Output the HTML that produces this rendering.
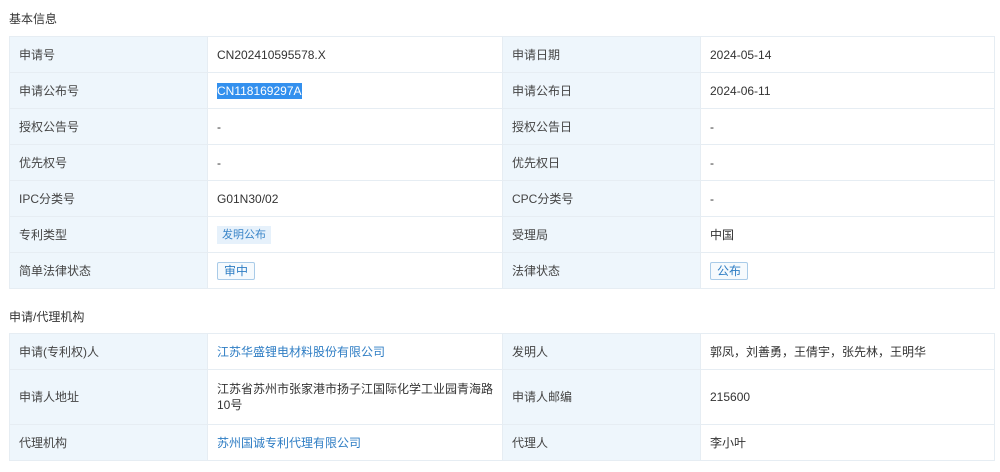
<!DOCTYPE html>
<html><head><meta charset="utf-8"><style>
*{margin:0;padding:0;box-sizing:border-box}
body{width:1000px;height:472px;background:#fff;font-family:"Liberation Sans","Noto Sans CJK SC",sans-serif;font-size:12px;color:#333;overflow:hidden;position:relative}
.title{position:absolute;left:9px;font-size:12px;color:#333}
table{position:absolute;left:9px;width:985px;border-collapse:collapse;table-layout:fixed}
td{border:1px solid #e6edf3;padding:0 9px;vertical-align:middle;line-height:16px}
td.l{background:#eef6fc;color:#444}
tr{height:36px}
.sel{background:#3390ee;color:#fff;padding:1px 0}
.tag1{display:inline-block;background:#e6f1fb;color:#3a85c8;font-size:11px;padding:1px 5px;line-height:16px}
.tag2{display:inline-block;border:1px solid #a9cbe8;border-radius:2px;color:#2e7dc4;font-size:12px;padding:0 6px;line-height:16px;background:#f6fafd}
a{color:#2e7dc4;text-decoration:none}
.br{word-break:break-all;padding-right:6px}
</style></head><body>
<div class="title" style="top:10px">基本信息</div>
<table style="top:36px">
<colgroup><col style="width:198px"><col style="width:295px"><col style="width:198px"><col style="width:294px"></colgroup>
<tr><td class="l">申请号</td><td>CN202410595578.X</td><td class="l">申请日期</td><td>2024-05-14</td></tr>
<tr><td class="l">申请公布号</td><td><span class="sel">CN118169297A</span></td><td class="l">申请公布日</td><td>2024-06-11</td></tr>
<tr><td class="l">授权公告号</td><td>-</td><td class="l">授权公告日</td><td>-</td></tr>
<tr><td class="l">优先权号</td><td>-</td><td class="l">优先权日</td><td>-</td></tr>
<tr><td class="l">IPC分类号</td><td>G01N30/02</td><td class="l">CPC分类号</td><td>-</td></tr>
<tr><td class="l">专利类型</td><td><span class="tag1">发明公布</span></td><td class="l">受理局</td><td>中国</td></tr>
<tr><td class="l">简单法律状态</td><td><span class="tag2">审中</span></td><td class="l">法律状态</td><td><span class="tag2">公布</span></td></tr>
</table>
<div class="title" style="top:308px">申请/代理机构</div>
<table style="top:333px">
<colgroup><col style="width:198px"><col style="width:295px"><col style="width:198px"><col style="width:294px"></colgroup>
<tr><td class="l">申请(专利权)人</td><td><a>江苏华盛锂电材料股份有限公司</a></td><td class="l">发明人</td><td>郭凤，刘善勇，王倩宇，张先林，王明华</td></tr>
<tr style="height:55px"><td class="l">申请人地址</td><td class="br">江苏省苏州市张家港市扬子江国际化学工业园青海路10号</td><td class="l">申请人邮编</td><td>215600</td></tr>
<tr><td class="l">代理机构</td><td><a>苏州国诚专利代理有限公司</a></td><td class="l">代理人</td><td>李小叶</td></tr>
</table>
</body></html>
